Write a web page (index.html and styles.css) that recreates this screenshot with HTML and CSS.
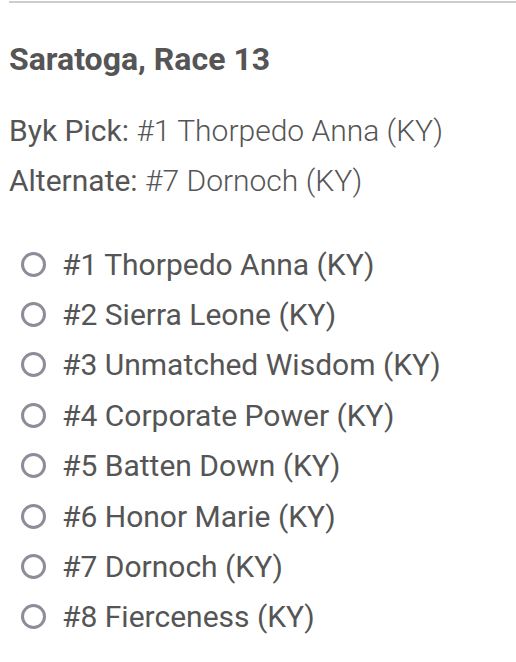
FILE: index.html
```html
<!DOCTYPE html>
<html lang="en">
<head>
  <meta charset="UTF-8" />
  <meta name="viewport" content="width=device-width, initial-scale=1.0" />
  <title>Saratoga, Race 13</title>
  <link rel="stylesheet" href="styles.css">
</head>
<body>
  <div class="race">
    <hr class="divider">
    <h2 class="race-title">Saratoga, Race 13</h2>
    <div class="picks">
      <div class="pick-line">Byk Pick: <span class="pick-value">#1 Thorpedo Anna (KY)</span></div>
      <div class="pick-line">Alternate: <span class="pick-value">#7 Dornoch (KY)</span></div>
    </div>
    <form class="runners">
      <label class="runner"><input type="radio" name="runner" value="1"><span class="dot"></span>#1 Thorpedo Anna (KY)</label>
      <label class="runner"><input type="radio" name="runner" value="2"><span class="dot"></span>#2 Sierra Leone (KY)</label>
      <label class="runner"><input type="radio" name="runner" value="3"><span class="dot"></span>#3 Unmatched Wisdom (KY)</label>
      <label class="runner"><input type="radio" name="runner" value="4"><span class="dot"></span>#4 Corporate Power (KY)</label>
      <label class="runner"><input type="radio" name="runner" value="5"><span class="dot"></span>#5 Batten Down (KY)</label>
      <label class="runner"><input type="radio" name="runner" value="6"><span class="dot"></span>#6 Honor Marie (KY)</label>
      <label class="runner"><input type="radio" name="runner" value="7"><span class="dot"></span>#7 Dornoch (KY)</label>
      <label class="runner"><input type="radio" name="runner" value="8"><span class="dot"></span>#8 Fierceness (KY)</label>
    </form>
  </div>
</body>
</html>
```

FILE: styles.css
```css
body {
  margin: 0;
  padding: 0;
  background: #fff;
  color: #555;
  font-family: Roboto, 'Noto Sans', Arial, sans-serif;
}
.race {
  padding: 1px 0 0 9px;
}
.divider {
  border: none;
  height: 2px;
  background: #cdcdcd;
  margin: 0;
}
.race-title {
  font-size: 32px;
  font-weight: bold;
  line-height: 38px;
  margin: 37px 0 0 0;
}
.picks {
  margin-top: 28px;
  font-size: 30px;
  line-height: 50px;
}
.pick-value {
  font-weight: 300;
}
.runners {
  margin-top: 33px;
  display: flex;
  flex-direction: column;
}
.runner {
  display: flex;
  align-items: center;
  height: 50.4px;
  font-size: 30px;
  padding-left: 12px;
}
.runner input {
  display: none;
}
.dot {
  width: 19px;
  height: 19px;
  border: 3px solid #8e8c99;
  border-radius: 50%;
  margin-right: 16px;
  flex: none;
}
```
